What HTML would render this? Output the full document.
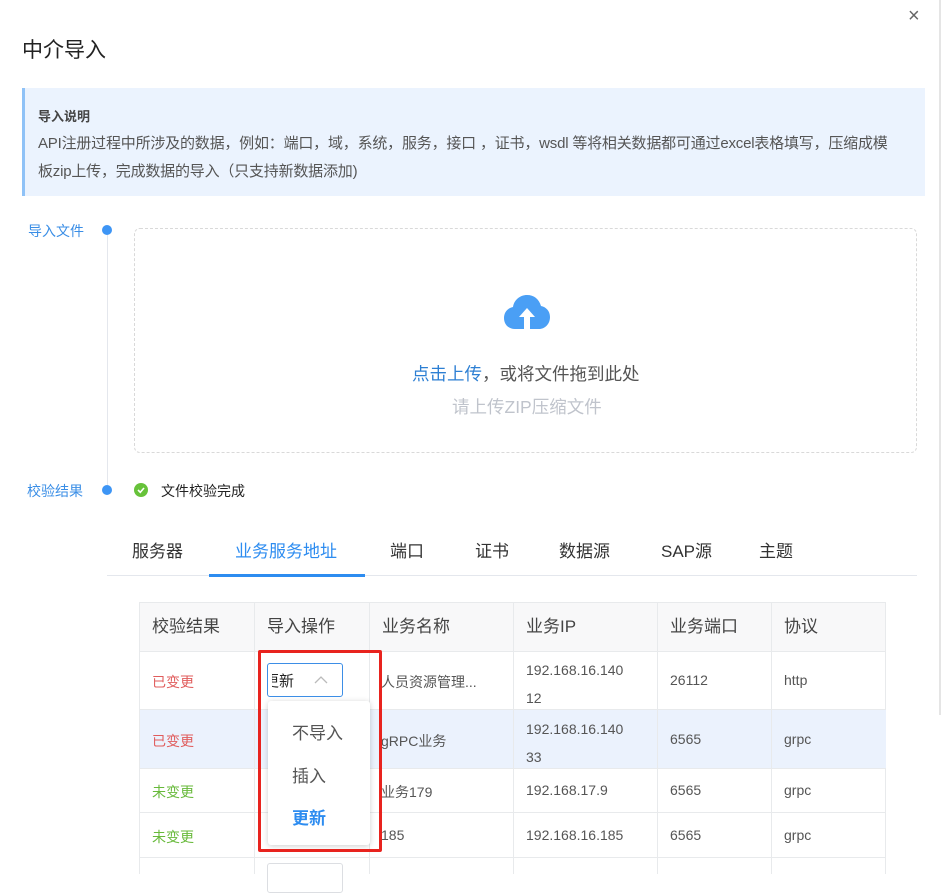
<!DOCTYPE html>
<html><head><meta charset="utf-8"><style>
*{box-sizing:border-box;margin:0;padding:0}
body{width:945px;height:874px;overflow:hidden;background:#fff;font-family:"Liberation Sans","Noto Sans CJK SC",sans-serif;color:#333;position:relative}
.a{position:absolute;white-space:nowrap}
.th{position:absolute;top:602px;height:50px;line-height:50px;font-size:17px;color:#444;padding-left:13px}
.row{position:absolute;left:139px;width:747px;border-bottom:1px solid #e8eaec}
.c{position:absolute;font-size:14px;color:#555;padding-left:13px}
.t{position:absolute;top:537px;font-size:17px;color:#333;white-space:nowrap}
</style></head><body>
<div class="a" style="left:22px;top:34px;font-size:21px;color:#222">中介导入</div>
<div class="a" style="left:908px;top:5px;font-size:20px;color:#666">×</div>
<div class="a" style="left:939px;top:0;width:2px;height:715px;background:#e5e5e5"></div>
<div class="a" style="left:22px;top:88px;width:903px;height:108px;background:#ebf3fe;border-left:3px solid #8fc2f7"></div>
<div class="a" style="left:38px;top:106px;font-size:13px;font-weight:bold;color:#444">导入说明</div>
<div class="a" style="left:38px;top:130px;font-size:15px;color:#555;line-height:28px;letter-spacing:-0.2px">API注册过程中所涉及的数据，例如：端口，域，系统，服务，接口 ，证书，wsdl 等将相关数据都可通过excel表格填写，压缩成模<br>板zip上传，完成数据的导入（只支持新数据添加)</div>
<div class="a" style="left:28px;top:221px;font-size:14px;color:#3a8ee6">导入文件</div>
<div class="a" style="left:102px;top:225px;width:10px;height:10px;border-radius:50%;background:#3d95f5"></div>
<div class="a" style="left:107px;top:235px;width:1px;height:250px;background:#e4e7ed"></div>
<div class="a" style="left:134px;top:228px;width:783px;height:225px;border:1px dashed #d9d9d9;border-radius:6px"></div>
<svg class="a" style="left:504px;top:295px" width="46" height="36" viewBox="0 0 46 36"><path d="M11 34C4 34 0 29 0 23C0 17 4 13 9 12C10 5 16 0 23 0C30 0 35 4 37 11C42 12 46 16 46 22C46 29 41 34 35 34Z" fill="#4a9ff5"/><path d="M23 13L31 22H26V34H20V22H15Z" fill="#fff"/></svg>
<div class="a" style="left:412px;top:361px;font-size:17.5px;color:#555"><span style="color:#2d7fd3">点击上传</span>，或将文件拖到此处</div>
<div class="a" style="left:452px;top:394px;font-size:17.5px;color:#c0c4cc">请上传ZIP压缩文件</div>
<div class="a" style="left:27px;top:481px;font-size:14px;color:#3a8ee6">校验结果</div>
<div class="a" style="left:102px;top:485px;width:10px;height:10px;border-radius:50%;background:#3d95f5"></div>
<svg class="a" style="left:134px;top:483px" width="14" height="14"><circle cx="7" cy="7" r="7" fill="#67c23a"/><path d="M4 7L6.3 9.3L10 5" stroke="#fff" stroke-width="1.6" fill="none"/></svg>
<div class="a" style="left:161px;top:481px;font-size:14px;color:#222">文件校验完成</div>
<div class="t" style="left:132px">服务器</div>
<div class="t" style="left:235px;color:#2d8cf0">业务服务地址</div>
<div class="t" style="left:390px">端口</div>
<div class="t" style="left:475px">证书</div>
<div class="t" style="left:559px">数据源</div>
<div class="t" style="left:661px">SAP源</div>
<div class="t" style="left:759px">主题</div>
<div class="a" style="left:107px;top:575px;width:810px;height:1px;background:#e4e7ed"></div>
<div class="a" style="left:209px;top:574px;width:156px;height:3px;background:#2d8cf0"></div>
<div class="a" style="left:139px;top:602px;width:747px;height:272px;border:1px solid #e8eaec;border-bottom:none"></div>
<div class="a" style="left:139px;top:602px;width:747px;height:50px;background:#f8f8f9;border:1px solid #e8eaec"></div>
<div class="a" style="left:140px;top:710px;width:746px;height:59px;background:#ebf2fd"></div>
<div class="row" style="top:652px;height:58px"></div>
<div class="row" style="top:710px;height:59px"></div>
<div class="row" style="top:769px;height:44px"></div>
<div class="row" style="top:813px;height:45px"></div>
<div class="a" style="left:254px;top:602px;width:1px;height:272px;background:#e8eaec"></div>
<div class="a" style="left:369px;top:602px;width:1px;height:272px;background:#e8eaec"></div>
<div class="a" style="left:513px;top:602px;width:1px;height:272px;background:#e8eaec"></div>
<div class="a" style="left:657px;top:602px;width:1px;height:272px;background:#e8eaec"></div>
<div class="a" style="left:771px;top:602px;width:1px;height:272px;background:#e8eaec"></div>
<div class="th" style="left:139px">校验结果</div><div class="th" style="left:254px">导入操作</div><div class="th" style="left:369px">业务名称</div><div class="th" style="left:513px">业务IP</div><div class="th" style="left:657px">业务端口</div><div class="th" style="left:771px">协议</div>
<div class="c" style="left:139px;top:672px;color:#e05c5c">已变更</div>
<div class="c" style="left:369px;top:672px;padding-left:12px">人员资源管理...</div>
<div class="c" style="left:513px;top:656px;line-height:28px">192.168.16.140<br>12</div>
<div class="c" style="left:657px;top:672px">26112</div>
<div class="c" style="left:771px;top:672px">http</div>
<div class="c" style="left:139px;top:731px;color:#e05c5c">已变更</div>
<div class="c" style="left:369px;top:731px;padding-left:12px">gRPC业务</div>
<div class="c" style="left:513px;top:715px;line-height:28px">192.168.16.140<br>33</div>
<div class="c" style="left:657px;top:731px">6565</div>
<div class="c" style="left:771px;top:731px">grpc</div>
<div class="c" style="left:139px;top:782px;color:#67b93a">未变更</div>
<div class="c" style="left:369px;top:782px;padding-left:12px">业务179</div>
<div class="c" style="left:513px;top:782px">192.168.17.9</div>
<div class="c" style="left:657px;top:782px">6565</div>
<div class="c" style="left:771px;top:782px">grpc</div>
<div class="c" style="left:139px;top:827px;color:#67b93a">未变更</div>
<div class="c" style="left:369px;top:827px;padding-left:12px">185</div>
<div class="c" style="left:513px;top:827px">192.168.16.185</div>
<div class="c" style="left:657px;top:827px">6565</div>
<div class="c" style="left:771px;top:827px">grpc</div>
<div class="a" style="left:267px;top:863px;width:76px;height:30px;border:1px solid #dcdee2;border-radius:3px;background:#fff"></div>
<div class="a" style="left:267px;top:663px;width:76px;height:34px;border:1px solid #3d8ee6;border-radius:3px;background:#fff"></div>
<div class="a" style="left:272px;top:670px;width:34px;height:20px;overflow:hidden"><span class="a" style="left:-8px;top:0;font-size:15px;color:#222">更新</span></div>
<svg class="a" style="left:314px;top:675px" width="14" height="9"><path d="M1 8L7 2L13 8" stroke="#bbb" stroke-width="1.3" fill="none"/></svg>
<div class="a" style="left:268px;top:701px;width:102px;height:144px;background:#fff;box-shadow:0 1px 6px rgba(0,0,0,.2);border-radius:3px"></div>
<div class="a" style="left:292px;top:719px;font-size:17px;color:#555">不导入</div>
<div class="a" style="left:292px;top:762px;font-size:17px;color:#555">插入</div>
<div class="a" style="left:292px;top:804px;font-size:17px;color:#2d8cf0;font-weight:bold">更新</div>
<div class="a" style="left:258px;top:650px;width:124px;height:202px;border:3px solid #e8231e;border-radius:2px"></div>
</body></html>
